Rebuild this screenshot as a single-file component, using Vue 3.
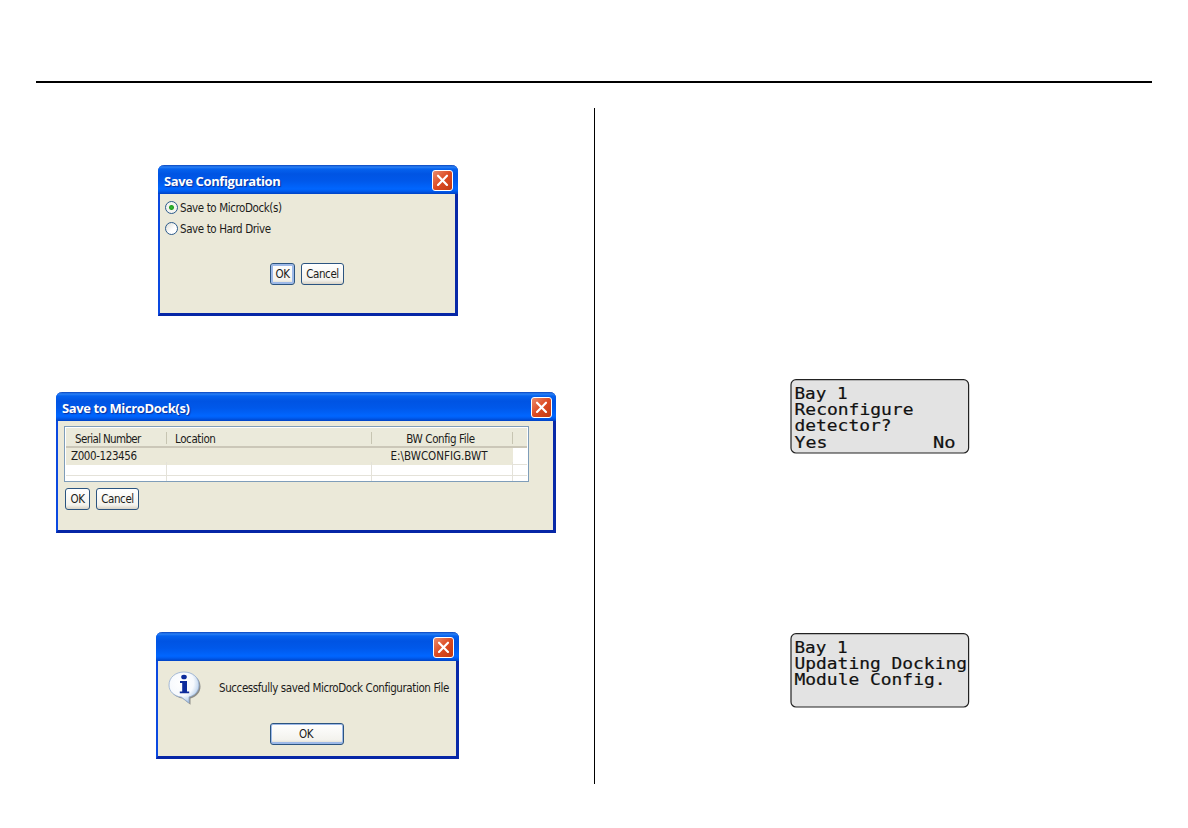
<script setup>
import { ref } from 'vue'

const target = ref('dock')

const rows = [
  { serial: 'Z000-123456', location: '', file: 'E:\\BWCONFIG.BWT' },
  { serial: '', location: '', file: '' },
  { serial: '', location: '', file: '' }
]

// width is the printed length of the segment on the 16 character display
const screens = [
  {
    name: 'reconfigure',
    segments: [
      { text: 'Bay 1', x: 4.5, y: 19.5, width: 53 },
      { text: 'Reconfigure', x: 4.5, y: 36, width: 119 },
      { text: 'detector?', x: 4.5, y: 52, width: 97 },
      { text: 'Yes', x: 4.5, y: 69, width: 33 },
      { text: 'No', x: 143, y: 69, width: 22.5 }
    ]
  },
  {
    name: 'updating',
    segments: [
      { text: 'Bay 1', x: 4.5, y: 19.5, width: 53 },
      { text: 'Updating Docking', x: 4.5, y: 36, width: 172.5 },
      { text: 'Module Config.', x: 4.5, y: 52, width: 151 }
    ]
  }
]
</script>

<template>
  <main class="page">
    <div class="rule"></div>
    <div class="columns">
      <section class="left">
        <div class="window save-config">
          <header class="title-bar">
            <span class="title">Save Configuration</span>
            <button class="close" aria-label="Close">
              <svg viewBox="0 0 19 19"><path d="M5 4.700l9 9.200M14 4.700l-9 9.200" /></svg>
            </button>
          </header>
          <div class="body">
            <label class="option">
              <input v-model="target" type="radio" value="dock" />
              <span>Save to MicroDock(s)</span>
            </label>
            <label class="option">
              <input v-model="target" type="radio" value="disk" />
              <span>Save to Hard Drive</span>
            </label>
            <div class="buttons">
              <button class="btn ok focused">OK</button>
              <button class="btn cancel">Cancel</button>
            </div>
          </div>
        </div>

        <div class="window save-dock">
          <header class="title-bar">
            <span class="title">Save to MicroDock(s)</span>
            <button class="close" aria-label="Close">
              <svg viewBox="0 0 19 19"><path d="M5 4.700l9 9.200M14 4.700l-9 9.200" /></svg>
            </button>
          </header>
          <div class="body">
            <div class="table">
              <div class="row head">
                <span>Serial Number</span>
                <span>Location</span>
                <span>BW Config File</span>
                <span></span>
              </div>
              <div v-for="(row, i) in rows" :key="i" class="row" :class="{ selected: i === 0 }">
                <span>{{ row.serial }}</span>
                <span>{{ row.location }}</span>
                <span class="file">{{ row.file }}</span>
                <span></span>
              </div>
            </div>
            <div class="buttons">
              <button class="btn ok">OK</button>
              <button class="btn cancel">Cancel</button>
            </div>
          </div>
        </div>

        <div class="window message">
          <header class="title-bar">
            <span class="title"></span>
            <button class="close" aria-label="Close">
              <svg viewBox="0 0 19 19"><path d="M5 4.700l9 9.200M14 4.700l-9 9.200" /></svg>
            </button>
          </header>
          <div class="body">
            <div class="notice">
              <svg class="info" viewBox="0 0 34 34">
                <defs>
                  <radialGradient id="bubble" cx="0.4" cy="0.35" r="0.7">
                    <stop offset="0" stop-color="#ffffff" />
                    <stop offset="0.6" stop-color="#f6f9fd" />
                    <stop offset="1" stop-color="#a4c2e6" />
                  </radialGradient>
                </defs>
                <path
                  d="M17.500 2.500c8.500 0 15 5.500 15 13 0 6-4 10.300-10 12v6.200l-8-6.200C7.500 26.500 2.500 22 2.500 15.500 2.500 8 9 2.500 17.500 2.500z"
                  fill="#666" opacity="0.7"
                />
                <path
                  d="M16 1c8.500 0 15 5.500 15 13 0 6-4 10.500-10 12v6l-7.500-5.800C6 25.200 1 20.500 1 14 1 6.500 7.500 1 16 1z"
                  fill="url(#bubble)" stroke="#91abd0" stroke-width="0.8"
                />
                <ellipse cx="16" cy="6" rx="2.800" ry="2.300" fill="#0c2b9c" />
                <path d="M12 10h7v10.500h2.200v1.800h-9.400v-1.800h2.400v-8.500H12z" fill="#0c2b9c" />
              </svg>
              <span>Successfully saved MicroDock Configuration File</span>
            </div>
            <button class="btn wide">OK</button>
          </div>
        </div>
      </section>

      <section class="right">
        <svg v-for="s in screens" :key="s.name" class="lcd" :class="s.name" viewBox="0 0 180 75">
          <rect x="1" y="0.700" width="177.600" height="73.300" rx="5" />
          <text
            v-for="seg in s.segments"
            :key="seg.text"
            :x="seg.x"
            :y="seg.y"
            :textLength="seg.width"
            lengthAdjust="spacingAndGlyphs"
          >{{ seg.text }}</text>
        </svg>
      </section>
    </div>
  </main>
</template>

<style>
body {
  margin: 0;
  background: #fff;
}
</style>

<style scoped>
.page {
  box-sizing: border-box;
  width: 1188px;
  height: 828px;
  padding: 81px 36px 0;
  overflow: hidden;
  font-family: "DejaVu Sans Condensed", "DejaVu Sans", sans-serif;
  font-stretch: condensed;
  font-size: 11.5px;
  letter-spacing: -0.4px;
  color: #1c1c1a;
}

.rule {
  height: 2px;
  background: #000;
}

.columns {
  display: grid;
  grid-template-columns: 558px 1fr;
  height: 676px;
  margin-top: 25px;
}

.left,
.right {
  display: flex;
  flex-direction: column;
  align-items: flex-start;
}

.right {
  border-left: 1px solid #000;
}

.window {
  display: flex;
  flex-direction: column;
  box-sizing: border-box;
  border: solid #0a48e0;
  border-width: 0 3px 3px 2px;
  border-right-color: #0829a8;
  border-bottom-color: #0626a6;
  border-radius: 6px 6px 0 0;
  background: #ebe9d9;
}

.save-config {
  width: 300px;
  height: 151px;
  margin: 57px 0 0 122px;
}

.save-dock {
  width: 500px;
  height: 141px;
  margin: 76px 0 0 20px;
}

.message {
  width: 303px;
  height: 127px;
  margin: 99px 0 0 120px;
}

.title-bar {
  display: flex;
  align-items: center;
  justify-content: space-between;
  box-sizing: border-box;
  flex: none;
  height: 29px;
  margin: 0 -3px 0 -2px;
  padding: 2px 4px 0 6px;
  border-radius: 6px 6px 0 0;
  background: linear-gradient(#0a45bd 0, #2a80f5 2px, #0562ee 4px, #0054e3 9px, #0058ea 16px, #0066ff 24px, #005cf0 26px, #0042c4 29px);
}

.save-config .title-bar,
.message .title-bar {
  padding-right: 5px;
}

.title {
  color: #fff;
  font-family: "Open Sans", "Noto Sans", sans-serif;
  font-stretch: normal;
  font-size: 13px;
  font-weight: 700;
  letter-spacing: -0.38px;
  line-height: 20px;
  white-space: nowrap;
  text-shadow: 1px 1px 1px #0b2f9b;
}

.close {
  width: 21px;
  height: 21px;
  padding: 0;
  box-sizing: border-box;
  border: 1px solid #fff;
  border-radius: 3px;
  background: linear-gradient(135deg, #ec8c6c, #dc4a22 50%, #c23a12);
}

.close svg {
  display: block;
  width: 19px;
  height: 19px;
  fill: none;
  stroke: #fff;
  stroke-width: 2.2;
  stroke-linecap: round;
}

.body {
  flex: 1;
  min-height: 0;
}

.option {
  display: flex;
  align-items: center;
  height: 21px;
  padding-left: 5px;
  gap: 2px;
}

.save-config .body {
  padding-top: 3px;
}

.option input {
  appearance: none;
  flex: none;
  width: 13px;
  height: 13px;
  margin: 0;
  box-sizing: border-box;
  border: 1px solid #2c5b8c;
  border-radius: 50%;
  background: linear-gradient(135deg, #dcdcd4, #fff 60%);
}

.option input:checked {
  background: radial-gradient(circle, #35b835 0, #22a122 2px, #f4f4f0 3px);
}

.option span {
  white-space: nowrap;
}

.buttons {
  display: flex;
  gap: 6px;
}

.save-config .buttons {
  margin: 24px 0 0 110px;
}

.btn {
  box-sizing: border-box;
  height: 22px;
  padding: 0;
  border: 1px solid #2b5480;
  border-radius: 3px;
  background: linear-gradient(#fff, #f3f2ed 80%, #d8d2c5);
  color: #1c1c1a;
  font: inherit;
  letter-spacing: inherit;
  line-height: 20px;
}

.ok {
  width: 25px;
}

.cancel {
  width: 43px;
}

.focused {
  box-shadow: inset 0 0 0 2px #9db9e8;
}

.save-dock .body {
  padding: 5px 0 0 6px;
}

.table {
  box-sizing: border-box;
  width: 465px;
  height: 56px;
  padding: 1px;
  border: 1px solid #7f9db9;
  background: #fff;
  overflow: hidden;
}

.row {
  display: grid;
  grid-template-columns: 101px 205px 141px 1fr;
  height: 14px;
  line-height: 16px;
}

.row span {
  box-sizing: border-box;
  padding-left: 5px;
  border-right: 1px solid #e4e2d9;
  border-bottom: 1px solid #e4e2d9;
  white-space: nowrap;
}

.row span:last-child {
  border-right: 0;
}

.head {
  height: 20px;
  box-sizing: border-box;
  padding: 4px 0 3px;
  border-bottom: 2px solid #cbc7b8;
  background: #ebeadb;
  line-height: 14px;
}

.head span {
  height: 12px;
  padding-left: 8px;
  border-right-color: #c7c5b2;
  border-bottom: 0;
}

.head span:first-child {
  padding-left: 9px;
  letter-spacing: -0.65px;
}

.head span:nth-child(3) {
  padding: 0 3px 0 0;
  text-align: center;
}

.selected span:not(:last-child) {
  border-color: #ebe9d9;
  background: #ebe9d9;
}

.row .file {
  padding: 0 6px 0 0;
  text-align: center;
  letter-spacing: 0;
}

.save-dock .buttons {
  margin: 6px 0 0 1px;
}

.message .body {
  display: flex;
  flex-direction: column;
}

.notice {
  display: flex;
  align-items: center;
  height: 34px;
  margin: 10px 0 0 10px;
  white-space: nowrap;
}

.info {
  width: 34px;
  height: 34px;
  margin-right: 17px;
}

.wide {
  width: 74px;
  margin: 18px 0 0 112px;
  padding-right: 2px;
  box-shadow: inset 0 0 0 1px #9db9e8, inset 0 -2px 0 #9db9e8;
}

.lcd {
  width: 180px;
  height: 75px;
}

.lcd rect {
  fill: #e3e3e3;
  stroke: #222;
  stroke-width: 1.2;
}

.lcd text {
  fill: #111;
  stroke: #111;
  stroke-width: 0.2;
  font-family: "DejaVu Sans Mono", monospace;
  font-stretch: normal;
  font-size: 15px;
  letter-spacing: 0;
}

.reconfigure {
  margin: 271px 0 0 195px;
}

.updating {
  margin: 179px 0 0 195px;
}
</style>
